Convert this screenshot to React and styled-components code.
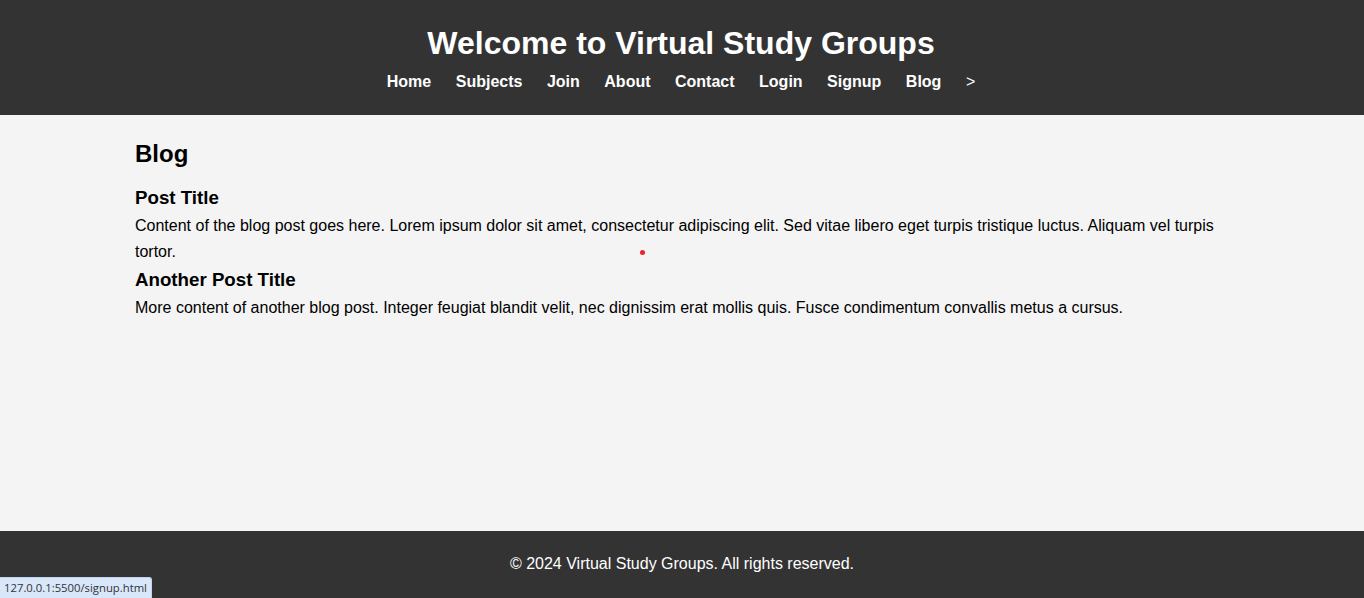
import React from 'react';
import styled, { createGlobalStyle } from 'styled-components';

const GlobalStyle = createGlobalStyle`
  html, body {
    margin: 0;
    padding: 0;
  }
  body {
    font-family: "Liberation Sans", Arial, sans-serif;
    line-height: 1.6;
    background-color: #f4f4f4;
    color: #000;
  }
`;

const navItems = ['Home', 'Subjects', 'Join', 'About', 'Contact', 'Login', 'Signup', 'Blog'];

const posts = [
  {
    title: 'Post Title',
    body: 'Content of the blog post goes here. Lorem ipsum dolor sit amet, consectetur adipiscing elit. Sed vitae libero eget turpis tristique luctus. Aliquam vel turpis tortor.',
  },
  {
    title: 'Another Post Title',
    body: 'More content of another blog post. Integer feugiat blandit velit, nec dignissim erat mollis quis. Fusce condimentum convallis metus a cursus.',
  },
];

export default function App() {
  return (
    <Page>
      <GlobalStyle />
      <Header>
        <Title>Welcome to Virtual Study Groups</Title>
        <Nav>
          {navItems.map((item) => (
            <NavLink key={item} href="#">{item}</NavLink>
          ))}
          <NavMore>&gt;</NavMore>
        </Nav>
      </Header>
      <Main>
        <Heading>Blog</Heading>
        {posts.map((post) => (
          <article key={post.title}>
            <PostTitle>{post.title}</PostTitle>
            <PostBody>{post.body}</PostBody>
          </article>
        ))}
        <CursorDot />
      </Main>
      <Footer>
        <p>&copy; 2024 Virtual Study Groups. All rights reserved.</p>
      </Footer>
      <StatusBar>127.0.0.1:5500/signup.html</StatusBar>
    </Page>
  );
}

const Page = styled.div`
  display: flex;
  flex-direction: column;
  min-height: 100vh;
`;

const Header = styled.header`
  background-color: #333;
  color: #fff;
  text-align: center;
  padding: 18px 0 20px;
`;

const Title = styled.h1`
  margin: 0 2px 0 0;
  font-size: 32px;
  line-height: 51px;
`;

const Nav = styled.nav`
  display: flex;
  justify-content: center;
  align-items: center;
  gap: 24.5px;
  padding-right: 2px;
`;

const NavLink = styled.a`
  color: #fff;
  text-decoration: none;
  font-weight: bold;
  font-size: 16px;
`;

const NavMore = styled.span`
  color: #fff;
  font-size: 16px;
`;

const Main = styled.main`
  flex: 1;
  position: relative;
  width: 1094px;
  margin: 0 auto;
  padding: 20px 0;
`;

const Heading = styled.h2`
  margin: 0 0 10px;
  font-size: 24px;
  line-height: 38px;
`;

const PostTitle = styled.h3`
  margin: 0;
  font-size: 18.72px;
  line-height: 30px;
`;

const PostBody = styled.p`
  margin: 0;
  font-size: 16px;
  line-height: 26px;
`;

const CursorDot = styled.div`
  position: absolute;
  left: 505px;
  top: 135px;
  width: 5px;
  height: 5px;
  border-radius: 50%;
  background-color: #e8242a;
`;

const Footer = styled.footer`
  background-color: #333;
  color: #fff;
  text-align: center;
  padding: 20px 0 21px;
  p {
    margin: 0;
    font-size: 16px;
    line-height: 26px;
  }
`;

const StatusBar = styled.div`
  position: fixed;
  left: 0;
  bottom: 0;
  padding: 2px 4px 3px;
  background-color: #d9e7fb;
  border: 1px solid #c4d4ec;
  border-left: none;
  border-bottom: none;
  border-top-right-radius: 3px;
  font-family: "Open Sans", "Noto Sans", sans-serif;
  font-size: 11.3px;
  line-height: 15px;
  color: #333;
`;
